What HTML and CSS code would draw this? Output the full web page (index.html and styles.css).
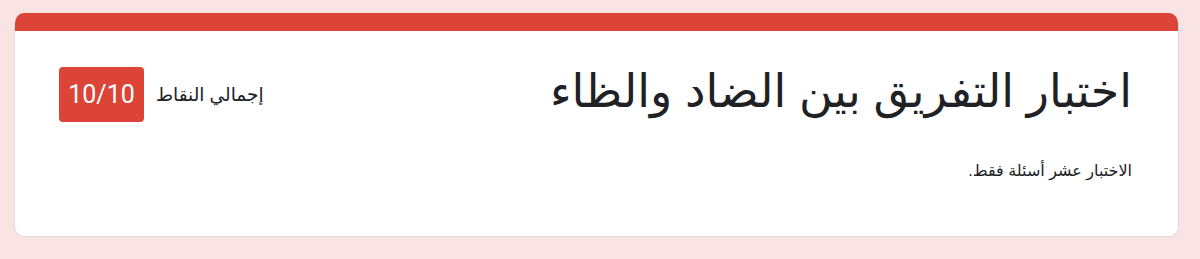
FILE: index.html
```html
<!DOCTYPE html>
<html lang="ar" dir="rtl">
<head>
    <meta charset="UTF-8">
    <meta name="viewport" content="width=device-width, initial-scale=1.0">
    <title>اختبار التفريق بين الضاد والظاء</title>
    <link rel="stylesheet" href="styles.css">
</head>
<body>
    <div class="card">
        <div class="card-top"></div>
        <div class="card-body">
            <div class="header">
                <h1 class="title">اختبار التفريق بين الضاد والظاء</h1>
                <div class="score">
                    <span class="score-label">إجمالي النقاط</span>
                    <span class="score-badge" dir="ltr">10/10</span>
                </div>
            </div>
            <p class="description">الاختبار عشر أسئلة فقط.</p>
        </div>
    </div>
</body>
</html>
```

FILE: styles.css
```css
:root {
    font-family: Arial, "Liberation Sans", "DejaVu Sans", sans-serif;
    background: #fae3e3;
    color: #202124;
}

body {
    margin: 0;
    padding: 13px 21px 0 14px;
}

.card {
    background: white;
    border-radius: 10px;
    border: 1px solid #dadce0;
    border-top: none;
    overflow: hidden;
    height: 224px;
    box-sizing: border-box;
}

.card-top {
    height: 18px;
    background: #db4437;
}

.card-body {
    padding: 33px 46px 0 44px;
}

.header {
    display: flex;
    justify-content: space-between;
    align-items: center;
}

.title {
    margin: 0 0 6px;
    font-size: 46px;
    font-weight: normal;
    line-height: 55px;
}

.score {
    display: flex;
    align-items: center;
    gap: 12px;
}

.score-label {
    font-size: 18.5px;
}

.score-badge {
    font-family: Roboto, sans-serif;
    font-size: 25px;
    color: white;
    background: #db4437;
    border-radius: 4px;
    width: 85px;
    height: 55px;
    display: flex;
    align-items: center;
    justify-content: center;
}

.description {
    margin: 36px 0 0;
    font-size: 16px;
}
```
